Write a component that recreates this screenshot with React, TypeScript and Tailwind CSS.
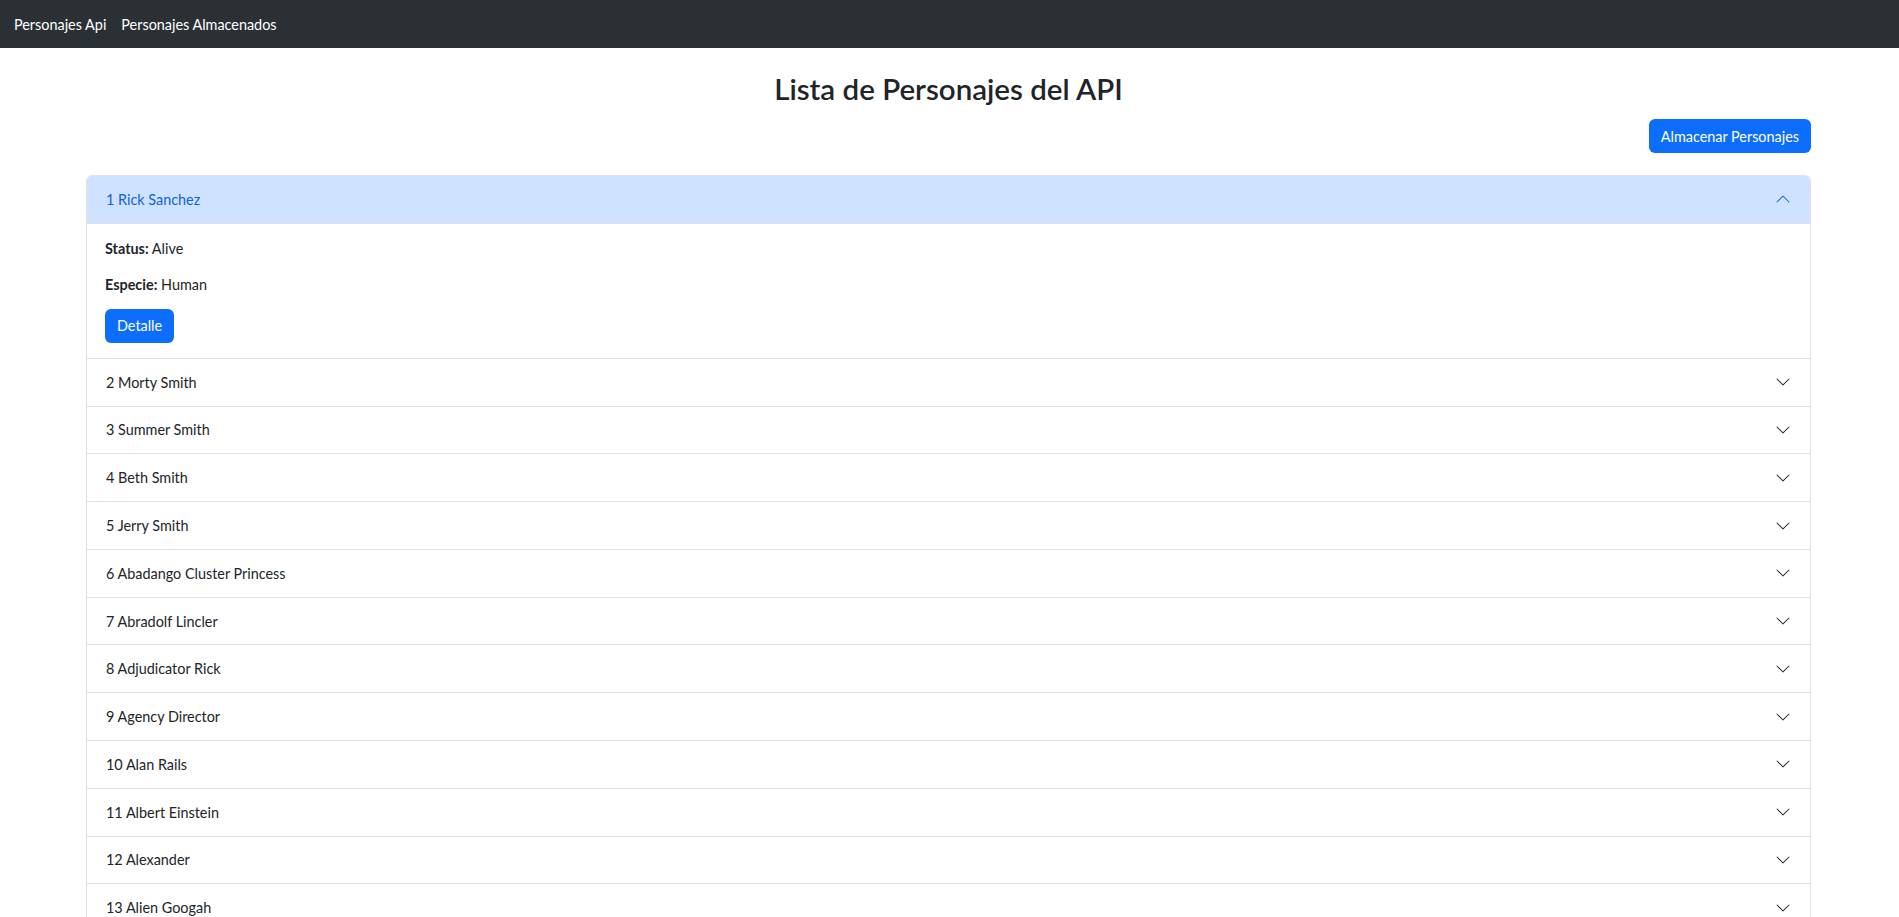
import React from "react";

const names = [
  "Rick Sanchez",
  "Morty Smith",
  "Summer Smith",
  "Beth Smith",
  "Jerry Smith",
  "Abadango Cluster Princess",
  "Abradolf Lincler",
  "Adjudicator Rick",
  "Agency Director",
  "Alan Rails",
  "Albert Einstein",
  "Alexander",
  "Alien Googah",
  "Alien Morty",
  "Alien Rick",
  "Amish Cyborg",
  "Annie",
  "Antenna Morty",
  "Antenna Rick",
  "Ants in my Eyes Johnson",
];

function Chevron({ open }: { open: boolean }) {
  return (
    <svg
      width="16"
      height="16"
      viewBox="0 0 16 16"
      className={open ? "rotate-180 text-[#0c63e4]" : "text-[#212529]"}
      fill="currentColor"
    >
      <path
        fillRule="evenodd"
        d="M1.646 4.646a.5.5 0 0 1 .708 0L8 10.293l5.646-5.647a.5.5 0 0 1 .708.708l-6 6a.5.5 0 0 1-.708 0l-6-6a.5.5 0 0 1 0-.708z"
      />
    </svg>
  );
}

export default function App() {
  const [open, setOpen] = React.useState<number>(0);
  return (
    <div className="min-h-screen bg-white text-[#212529] font-['Lato','Liberation_Sans',sans-serif] text-[14.4px]">
      <nav className="h-[48px] bg-[#2b3035] flex items-center pl-[14px] gap-[15px] text-white">
        <a className="leading-[21px] cursor-pointer">Personajes Api</a>
        <a className="leading-[21px] cursor-pointer">Personajes Almacenados</a>
      </nav>
      <div className="ml-[86px] mr-[88px] pb-10">
        <h2 className="mt-[22px] text-center text-[29.5px] leading-[38px] font-semibold">
          Lista de Personajes del API
        </h2>
        <div className="flex justify-end mt-[11px]">
          <button className="h-[34px] px-[12px] rounded-[6px] bg-[#0d6efd] text-white leading-[21px]">
            Almacenar Personajes
          </button>
        </div>
        <div className="mt-[22px] border border-[#dee2e6] rounded-[6px] overflow-hidden">
          {names.map((n, i) => {
            const isOpen = open === i;
            return (
              <div key={i} className={i > 0 ? "border-t border-[#dee2e6]" : ""}>
                <button
                  onClick={() => setOpen(isOpen ? -1 : i)}
                  className={
                    "w-full flex items-center justify-between pl-[19px] pr-[19px] py-[12.9px] leading-[21px] text-left " +
                    (isOpen ? "bg-[#cfe2ff] text-[#0c63e4] border-b border-[#dee2e6]" : "bg-white text-[#212529]")
                  }
                >
                  <span>
                    {i + 1} {n}
                  </span>
                  <Chevron open={isOpen} />
                </button>
                {isOpen && (
                  <div className="pl-[18px] pr-[18px] pt-[14px] pb-[15px]">
                    <p className="leading-[21px] mb-[15px]">
                      <b className="font-bold">Status:</b> Alive
                    </p>
                    <p className="leading-[21px] mb-[14px]">
                      <b className="font-bold">Especie:</b> Human
                    </p>
                    <button className="h-[34px] px-[12px] rounded-[6px] bg-[#0d6efd] text-white leading-[21px]">
                      Detalle
                    </button>
                  </div>
                )}
              </div>
            );
          })}
        </div>
      </div>
    </div>
  );
}
